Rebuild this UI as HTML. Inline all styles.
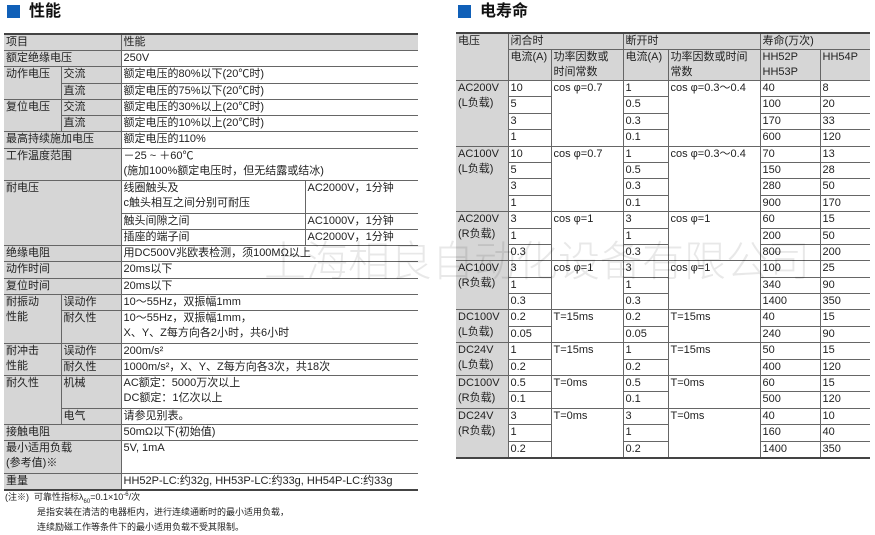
<!DOCTYPE html>
<html><head><meta charset="utf-8"><style>
*{margin:0;padding:0;box-sizing:border-box}
body{width:875px;height:533px;background:#fff;font-family:"Liberation Sans","Noto Sans CJK SC",sans-serif;color:#222;position:relative;overflow:hidden}
.t{position:absolute;font-size:16px;font-weight:bold;color:#111;top:2px;line-height:20px}
.sq{position:absolute;width:13px;height:13px;background:#1060b8;top:5px}
table{position:absolute;border-collapse:collapse;table-layout:fixed;font-size:11px;line-height:15px;border-top:2px solid #444;border-bottom:2px solid #444}
td{border:1px solid #666;padding:0 2px;vertical-align:top;white-space:nowrap;overflow:hidden}
.g{background:#d6d6d6}
#L{left:4px;top:33px;width:414px}
#L tr{height:16.25px}
#R{left:456px;top:32px;width:414px}
#R tr{height:16.4px}
td:first-child{border-left:none}
td:last-child{border-right:none}
.wm{position:absolute;left:264px;top:234px;font-size:42px;line-height:50px;color:rgba(0,0,0,0.09);white-space:nowrap;font-family:"Noto Sans CJK SC",sans-serif;font-weight:300}
.n{position:absolute;font-size:9px;line-height:15px;left:5px;top:490px}
.n sub,.n sup{font-size:6px;line-height:0}
</style></head><body>
<div class="sq" style="left:7px"></div><div class="t" style="left:29px">性能</div>
<div class="sq" style="left:458px"></div><div class="t" style="left:480px">电寿命</div>

<table id="L">
<colgroup><col style="width:57px"><col style="width:60px"><col style="width:184px"><col style="width:113px"></colgroup>
<tr><td class="g" colspan="2">项目</td><td class="g" colspan="2">性能</td></tr>
<tr><td class="g" colspan="2">额定绝缘电压</td><td colspan="2">250V</td></tr>
<tr><td class="g" rowspan="2">动作电压</td><td class="g">交流</td><td colspan="2">额定电压的80%以下(20℃时)</td></tr>
<tr><td class="g">直流</td><td colspan="2">额定电压的75%以下(20℃时)</td></tr>
<tr><td class="g" rowspan="2">复位电压</td><td class="g">交流</td><td colspan="2">额定电压的30%以上(20℃时)</td></tr>
<tr><td class="g">直流</td><td colspan="2">额定电压的10%以上(20℃时)</td></tr>
<tr><td class="g" colspan="2">最高持续施加电压</td><td colspan="2">额定电压的110%</td></tr>
<tr><td class="g" colspan="2" rowspan="2">工作温度范围</td><td colspan="2" rowspan="2">－25 ~ ＋60℃<br>(施加100%额定电压时，但无结露或结冰)</td></tr>
<tr></tr>
<tr><td class="g" colspan="2" rowspan="4">耐电压</td><td rowspan="2">线圈触头及<br>c触头相互之间分别可耐压</td><td rowspan="2">AC2000V，1分钟</td></tr>
<tr></tr>
<tr><td>触头间隙之间</td><td>AC1000V，1分钟</td></tr>
<tr><td>插座的端子间</td><td>AC2000V，1分钟</td></tr>
<tr><td class="g" colspan="2">绝缘电阻</td><td colspan="2">用DC500V兆欧表检测，须100MΩ以上</td></tr>
<tr><td class="g" colspan="2">动作时间</td><td colspan="2">20ms以下</td></tr>
<tr><td class="g" colspan="2">复位时间</td><td colspan="2">20ms以下</td></tr>
<tr><td class="g" rowspan="3">耐振动<br>性能</td><td class="g">误动作</td><td colspan="2">10～55Hz，双振幅1mm</td></tr>
<tr><td class="g" rowspan="2">耐久性</td><td colspan="2" rowspan="2">10～55Hz，双振幅1mm，<br>X、Y、Z每方向各2小时，共6小时</td></tr>
<tr></tr>
<tr><td class="g" rowspan="2">耐冲击<br>性能</td><td class="g">误动作</td><td colspan="2">200m/s²</td></tr>
<tr><td class="g">耐久性</td><td colspan="2">1000m/s²，X、Y、Z每方向各3次，共18次</td></tr>
<tr><td class="g" rowspan="3">耐久性</td><td class="g" rowspan="2">机械</td><td colspan="2" rowspan="2">AC额定：5000万次以上<br>DC额定：1亿次以上</td></tr>
<tr></tr>
<tr><td class="g">电气</td><td colspan="2">请参见别表。</td></tr>
<tr><td class="g" colspan="2">接触电阻</td><td colspan="2">50mΩ以下(初始值)</td></tr>
<tr><td class="g" colspan="2" rowspan="2">最小适用负载<br>(参考值)※</td><td colspan="2" rowspan="2">5V, 1mA</td></tr>
<tr></tr>
<tr><td class="g" colspan="2">重量</td><td colspan="2">HH52P-LC:约32g, HH53P-LC:约33g, HH54P-LC:约33g</td></tr>
</table>

<table id="R">
<colgroup><col style="width:52px"><col style="width:43px"><col style="width:72px"><col style="width:45px"><col style="width:92px"><col style="width:60px"><col style="width:50px"></colgroup>
<tr style="height:16px"><td class="g" rowspan="2">电压</td><td class="g" colspan="2">闭合时</td><td class="g" colspan="2">断开时</td><td class="g" colspan="2">寿命(万次)</td></tr>
<tr style="height:31px"><td class="g">电流(A)</td><td class="g">功率因数或<br>时间常数</td><td class="g">电流(A)</td><td class="g">功率因数或时间<br>常数</td><td class="g">HH52P<br>HH53P</td><td class="g">HH54P</td></tr>
<tr><td class="g" rowspan="4">AC200V<br>(L负载)</td><td>10</td><td rowspan="4">cos φ=0.7</td><td>1</td><td rowspan="4">cos φ=0.3～0.4</td><td>40</td><td>8</td></tr>
<tr><td>5</td><td>0.5</td><td>100</td><td>20</td></tr>
<tr><td>3</td><td>0.3</td><td>170</td><td>33</td></tr>
<tr><td>1</td><td>0.1</td><td>600</td><td>120</td></tr>
<tr><td class="g" rowspan="4">AC100V<br>(L负载)</td><td>10</td><td rowspan="4">cos φ=0.7</td><td>1</td><td rowspan="4">cos φ=0.3～0.4</td><td>70</td><td>13</td></tr>
<tr><td>5</td><td>0.5</td><td>150</td><td>28</td></tr>
<tr><td>3</td><td>0.3</td><td>280</td><td>50</td></tr>
<tr><td>1</td><td>0.1</td><td>900</td><td>170</td></tr>
<tr><td class="g" rowspan="3">AC200V<br>(R负载)</td><td>3</td><td rowspan="3">cos φ=1</td><td>3</td><td rowspan="3">cos φ=1</td><td>60</td><td>15</td></tr>
<tr><td>1</td><td>1</td><td>200</td><td>50</td></tr>
<tr><td>0.3</td><td>0.3</td><td>800</td><td>200</td></tr>
<tr><td class="g" rowspan="3">AC100V<br>(R负载)</td><td>3</td><td rowspan="3">cos φ=1</td><td>3</td><td rowspan="3">cos φ=1</td><td>100</td><td>25</td></tr>
<tr><td>1</td><td>1</td><td>340</td><td>90</td></tr>
<tr><td>0.3</td><td>0.3</td><td>1400</td><td>350</td></tr>
<tr><td class="g" rowspan="2">DC100V<br>(L负载)</td><td>0.2</td><td rowspan="2">T=15ms</td><td>0.2</td><td rowspan="2">T=15ms</td><td>40</td><td>15</td></tr>
<tr><td>0.05</td><td>0.05</td><td>240</td><td>90</td></tr>
<tr><td class="g" rowspan="2">DC24V<br>(L负载)</td><td>1</td><td rowspan="2">T=15ms</td><td>1</td><td rowspan="2">T=15ms</td><td>50</td><td>15</td></tr>
<tr><td>0.2</td><td>0.2</td><td>400</td><td>120</td></tr>
<tr><td class="g" rowspan="2">DC100V<br>(R负载)</td><td>0.5</td><td rowspan="2">T=0ms</td><td>0.5</td><td rowspan="2">T=0ms</td><td>60</td><td>15</td></tr>
<tr><td>0.1</td><td>0.1</td><td>500</td><td>120</td></tr>
<tr><td class="g" rowspan="3">DC24V<br>(R负载)</td><td>3</td><td rowspan="3">T=0ms</td><td>3</td><td rowspan="3">T=0ms</td><td>40</td><td>10</td></tr>
<tr><td>1</td><td>1</td><td>160</td><td>40</td></tr>
<tr><td>0.2</td><td>0.2</td><td>1400</td><td>350</td></tr>
</table>

<div class="wm">上海相良自动化设备有限公司</div>

<div class="n">(注※)&nbsp; 可靠性指标λ<sub>60</sub>=0.1×10<sup>-6</sup>/次<br>
<span style="padding-left:32px">是指安装在清洁的电器柜内，进行连续通断时的最小适用负载，</span><br>
<span style="padding-left:32px">连续励磁工作等条件下的最小适用负载不受其限制。</span></div>
</body></html>
